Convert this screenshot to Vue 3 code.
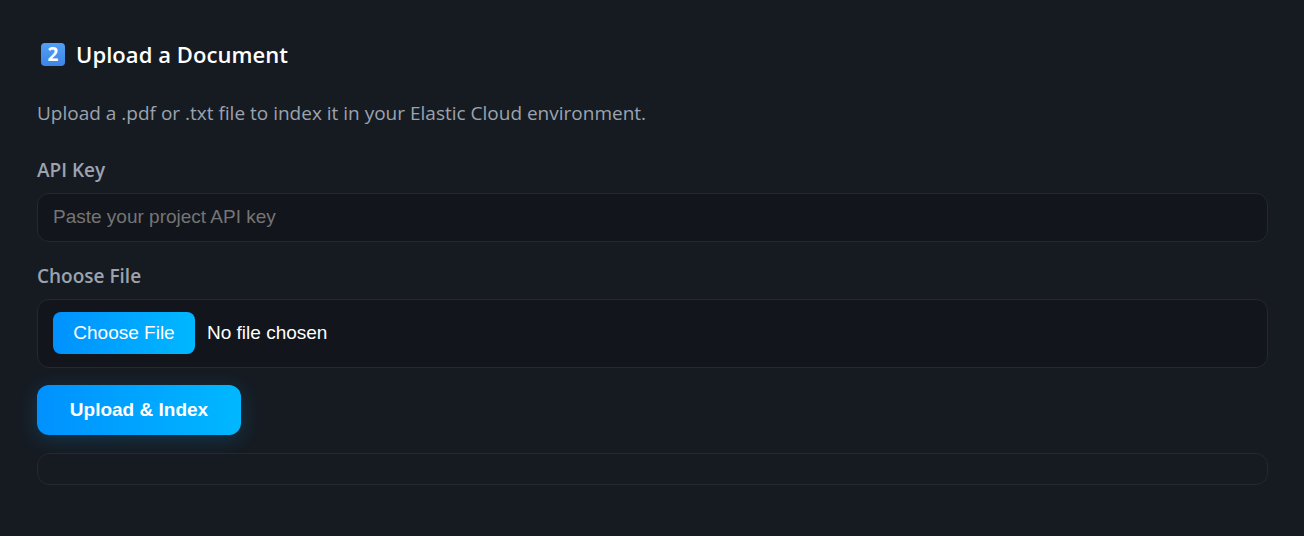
<script setup>
const title = 'Upload a Document'
</script>

<template>
  <main class="panel">
    <h2 class="title"><span class="keycap"><span class="keycap-digit">2</span></span>{{ title }}</h2>
    <p class="lead">Upload a .pdf or .txt file to index it in your Elastic Cloud environment.</p>
    <label class="label" for="key">API Key</label>
    <input id="key" class="field" type="text" placeholder="Paste your project API key" />
    <label class="label" for="file">Choose File</label>
    <input id="file" class="field file" type="file" />
    <button class="submit" type="button">Upload &amp; Index</button>
    <div class="status"></div>
  </main>
</template>

<style>
html, body { margin: 0; background: #161b22; }
</style>

<style scoped>
.panel {
  box-sizing: border-box;
  width: 1304px;
  height: 536px;
  padding: 39px 36px 0 37px;
  background: #161b22;
  font-family: "Open Sans", "Noto Sans", sans-serif;
  display: flex;
  flex-direction: column;
  align-items: stretch;
  overflow: hidden;
}
.title {
  display: flex;
  align-items: center;
  gap: 11px;
  margin: 0 0 0 4px;
  height: 30px;
  font-size: 22px;
  line-height: 30px;
  font-weight: 600;
  letter-spacing: 0.06px;
  color: #fff;
}
.keycap {
  width: 24px;
  height: 23px;
  border-radius: 4px;
  background: linear-gradient(180deg, #52a0f6, #3d84e6);
  display: flex;
  align-items: center;
  justify-content: center;
}
.keycap-digit {
  font-size: 19px;
  line-height: 1;
  font-weight: 700;
  color: #fff;
}
.lead {
  margin: 31px 0 10px;
  font-size: 19px;
  line-height: 26px;
  color: #9ca3af;
}
.label {
  margin-top: 21px;
  font-size: 19px;
  line-height: 26px;
  font-weight: 600;
  color: #9ca3af;
}
.field {
  box-sizing: border-box;
  display: block;
  width: 100%;
  margin: 10px 0 0;
  height: 49px;
  padding: 0 15px 2px;
  background: #12151c;
  border: 1px solid #232831;
  border-radius: 12px;
  color: #fff;
  font-family: "Liberation Sans", Arial, sans-serif;
  font-size: 19px;
  outline: none;
}
.field::placeholder { color: #757575; opacity: 1; }
.label + .file { height: 69px; padding: 12px 15px; }
.file::file-selector-button {
  width: 142px;
  height: 42px;
  margin-right: 12px;
  border: 0;
  border-radius: 8px;
  background: linear-gradient(90deg, #0091ff, #00b8ff);
  color: #fff;
  font-family: "Liberation Sans", Arial, sans-serif;
  font-size: 19px;
}
.submit {
  width: 204px;
  height: 50px;
  margin-top: 17px;
  border: 0;
  border-radius: 12px;
  background: linear-gradient(90deg, #0091ff, #00b8ff);
  box-shadow: 0 4px 20px rgba(0, 170, 255, 0.2);
  color: #fff;
  font-family: "Liberation Sans", Arial, sans-serif;
  font-size: 19px;
  font-weight: 700;
}
.status {
  height: 32px;
  box-sizing: border-box;
  margin-top: 18px;
  border: 1px solid #232831;
  border-radius: 12px;
  background: #161a21;
}
</style>
